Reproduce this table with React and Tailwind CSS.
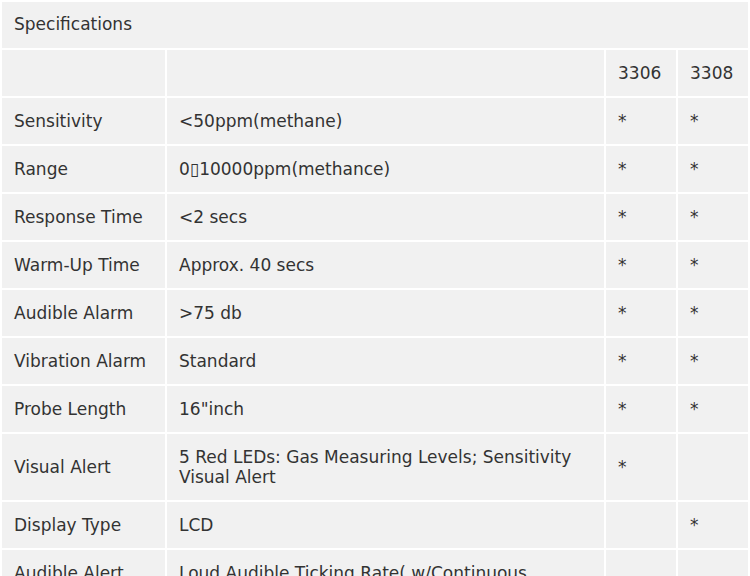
const rows = [
  ['Sensitivity', '<50ppm(methane)', '*', '*'],
  ['Range', '0\u25AF10000ppm(methance)', '*', '*'],
  ['Response Time', '<2 secs', '*', '*'],
  ['Warm-Up Time', 'Approx. 40 secs', '*', '*'],
  ['Audible Alarm', '>75 db', '*', '*'],
  ['Vibration Alarm', 'Standard', '*', '*'],
  ['Probe Length', '16"inch', '*', '*'],
  ['Visual Alert', '5 Red LEDs: Gas Measuring Levels; Sensitivity Visual Alert', '*', ''],
  ['Display Type', 'LCD', '', '*'],
];

const cell = 'bg-[#f1f1f1] px-3 py-[13px]';

function App() {
  return (
    <div className="min-h-screen bg-white text-[#333] font-['DejaVu_Sans',sans-serif] text-[17px] leading-[20px]">
      <table className="w-[750px] table-fixed border-separate border-spacing-[2px]">
        <colgroup>
          <col className="w-[163px]" />
          <col className="w-[437px]" />
          <col className="w-[70px]" />
          <col className="w-[70px]" />
        </colgroup>
        <tbody>
          <tr>
            <td colSpan={4} className="bg-[#f1f1f1] px-3 pt-[12px] pb-[14px]">Specifications</td>
          </tr>
          <tr>
            <td className={cell}>{'\u00A0'}</td>
            <td className={cell}></td>
            <td className={cell}>3306</td>
            <td className={cell}>3308</td>
          </tr>
          {rows.map((r) => (
            <tr key={r[0]}>
              {r.map((c, i) => (
                <td key={i} className={`${cell} align-middle`}>
                  {c || '\u00A0'}
                </td>
              ))}
            </tr>
          ))}
          <tr>
            <td className={`${cell} align-top`}>Audible Alert</td>
            <td className={`${cell} align-top`}>Loud Audible Ticking Rate( w/Continuous Concentration-Indicating Tone)</td>
            <td className={`${cell} align-top`}></td>
            <td className={`${cell} align-top`}></td>
          </tr>
        </tbody>
      </table>
    </div>
  );
}

export default App;
